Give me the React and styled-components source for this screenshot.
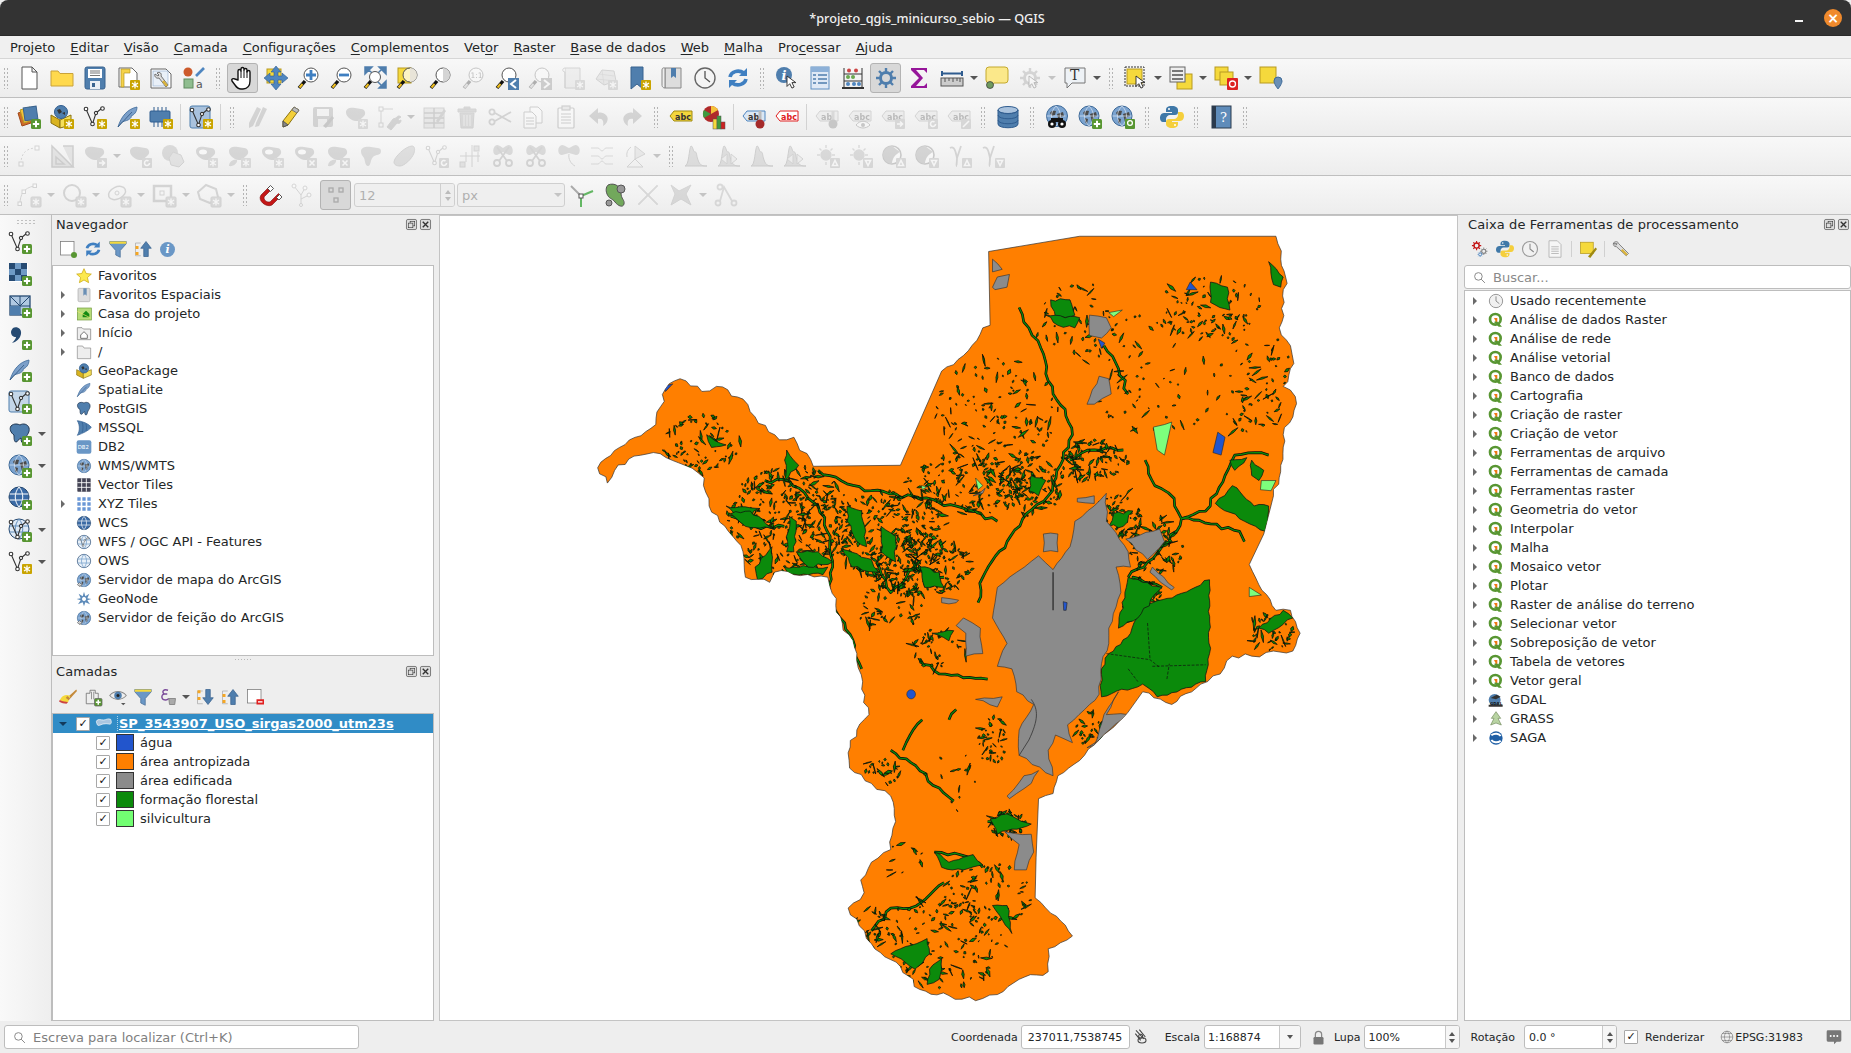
import React from 'react';
import styled, { createGlobalStyle } from 'styled-components';

const GlobalStyle = createGlobalStyle`
  html, body { margin: 0; padding: 0; background: #eeeeee; overflow: hidden; }
  body { font-family: "DejaVu Sans", "Liberation Sans", sans-serif; font-size: 13px; color: #232627; }
`;

/* ---------- icon parts ---------- */
const Star = () => (
  <g>
    <rect x="14" y="14" width="10" height="10" rx="1" fill="#c9a400" />
    <path d="M19 15.5v7M16 17l6 4M22 17l-6 4" stroke="#fff" strokeWidth="1.3" />
  </g>
);
const Plus = () => (
  <g>
    <rect x="14" y="14" width="10" height="10" rx="1.5" fill="#589632" />
    <path d="M19 15.8v6.4M15.8 19h6.4" stroke="#fff" strokeWidth="2" />
  </g>
);
const Badge = ({ fill = '#999', d }) => (
  <g>
    <rect x="14" y="14" width="10" height="10" rx="1" fill={fill} />
    <path d={d} stroke="#fff" strokeWidth="1.6" fill="none" />
  </g>
);
const Mag = ({ fill = '#fff', cx = 14, cy = 9, r = 7 }) => (
  <g>
    <path d="M8 15L2 22" stroke="#111" strokeWidth="3.4" />
    <path d="M5.5 18L2.5 21.5" stroke="#f0c020" strokeWidth="2" />
    <circle cx={cx} cy={cy} r={r} fill={fill} stroke="#555" strokeWidth="1" />
  </g>
);
const V = ({ c = '#333' }) => (
  <g fill="#fff" stroke={c} strokeWidth="1.1">
    <path d="M3 4l6.5 15L13 8l6-5" fill="none" />
    <circle cx="3" cy="4" r="1.8" />
    <circle cx="9.5" cy="19" r="1.8" />
    <circle cx="13" cy="8" r="1.6" />
    <circle cx="19.5" cy="3.5" r="1.8" />
  </g>
);
const Feather = () => (
  <g>
    <path d="M2 22C5 12 11 4 21 2c0 5-3 8-6 9 1 1-1 3-3 4s-5 1-7 3z" fill="#7b9fc9" stroke="#3e6a99" strokeWidth=".8" />
    <path d="M2 22L16 7" stroke="#2f5580" strokeWidth=".8" />
  </g>
);
const Globe = ({ r = 10, cx = 11, cy = 11 }) => (
  <g>
    <circle cx={cx} cy={cy} r={r} fill="#7ba3cf" stroke="#3e6a99" />
    <path d="M5 8c2-3 4-2 6-2l-1 4-3 1zM12 9l6-2 1 4-3 1v4l-2 1zM7 13l3 1-1 5-2-2z" fill="#4a4a4a" />
    <path d="M1.5 11h19M11 1c-6 6-6 14 0 20M11 1c6 6 6 14 0 20" stroke="#dde7f3" strokeWidth=".7" fill="none" />
  </g>
);
const GridGlobe = ({ fill = '#3a6aa5', line = '#fff' }) => (
  <g>
    <circle cx="11" cy="11" r="10" fill={fill} stroke="#24476f" />
    <path d="M1.5 8h19M1.5 14h19M11 1c-5 6-5 14 0 20M11 1c5 6 5 14 0 20" stroke={line} strokeWidth="1" fill="none" />
  </g>
);
const blobD = 'M2 7c0-4 5-5 9-4s9 0 10 4-3 5-4 7-6 3-9 1-6-4-6-8z';
const Blob = ({ fill = '#909090' }) => <path d={blobD} fill={fill} />;
const Pg = () => (
  <path d="M3 4c3-3 7-2 9-1 3-2 8-1 9 3 1 4-2 7-3 9-1 2-1 6-3 6s-2-4-2-5c-3 1-3 4-5 4S6 16 6 13C3 11 1 7 3 4z" fill="#4f7ead" stroke="#1f3550" strokeWidth="1" />
);
const Gear = ({ c = '#4f7ead' }) => (
  <g stroke={c} fill="none">
    <circle cx="12" cy="12" r="5.5" strokeWidth="3" />
    <path d="M12 2v5M12 17v5M2 12h5M17 12h5M5 5l3.5 3.5M15.5 15.5L19 19M19 5l-3.5 3.5M8.500 15.500L5 19" strokeWidth="2.4" />
  </g>
);
const Cursor = ({ x = 10, y = 10 }) => (
  <path transform={`translate(${x} ${y}) scale(.55)`} d="M0 0v19l5-5 4 8 4-2-4-8h7z" fill="#fff" stroke="#222" strokeWidth="1.6" />
);
const Abc = ({ fill = '#f4d63c', stroke = '#a08a10', color = '#333', label = 'abc' }) => (
  <g>
    <path d="M1 11l4-5h18v10H5z" fill={fill} stroke={stroke} />
    <text x="6" y="14.500" fontSize="8" fontWeight="700" fontFamily="DejaVu Sans" fill={color}>{label}</text>
  </g>
);
const Refresh = () => (
  <g fill="none" stroke="#3f7fc1" strokeWidth="3.6">
    <path d="M4 11c1-5 8-8 14-4" />
    <path d="M20 13c-1 5-8 8-14 4" />
    <path d="M21 2v8h-8z" fill="#3f7fc1" stroke="none" />
    <path d="M3 22v-8h8z" fill="#3f7fc1" stroke="none" />
  </g>
);
const Folder = ({ fill = '#ffd94d', stroke = '#c9a23a' }) => (
  <path d="M1 20V5h7l2 2.500h13V20z" fill={fill} stroke={stroke} />
);
const Hist = ({ up, down }) => (
  <g>
    <path d="M1 22c4 0 4-18 6-20 2 0 2 6 4 6s1 2 3 8 5 6 9 6z" fill="#aaa" stroke="#777" />
    {(up || down) && <path d="M10 10l-6 5 6 5zM14 10l6 5-6 5z" fill="#ddd" stroke="#888" />}
  </g>
);
const UpBadge = () => <Badge d="M16.500 21.500l2.500-5 2.500 5z" />;
const DownBadge = () => <Badge d="M16.500 16.500l2.500 5 2.500-5z" />;
const Sun = () => (
  <g stroke="#999" strokeWidth="1.4">
    <circle cx="10" cy="11" r="5" fill="#999" />
    <path d="M10 1v3M10 18v3M1 11h3M16 11h3M3.500 4.500l2 2M14.500 6.500l2-2" />
  </g>
);
const Contrast = () => (
  <g>
    <circle cx="10" cy="11" r="9" fill="#fff" stroke="#666" strokeWidth="1.6" />
    <path d="M10 2a9 9 0 0 0 0 18c0-6 4-10 8-12z" fill="#888" />
  </g>
);
const Gamma = () => <path d="M2 4c5-3 6 6 7 10l4-12M9 14c0 4-1 8 0 8" stroke="#888" strokeWidth="1.800" fill="none" />;
const Scissors = () => (
  <g fill="none" stroke="#888" strokeWidth="1.800">
    <circle cx="6" cy="19" r="3" />
    <circle cx="18" cy="19" r="3" />
    <path d="M8 17L18 3M16 17L6 3" />
  </g>
);

const icons = {
  new: <path d="M5 1h10l5 5v17H5z M15 1v5h5" fill="#fff" stroke="#555" strokeWidth="1" />,
  open: <Folder />,
  save: (
    <g>
      <rect x="2" y="1" width="20" height="22" rx="2" fill="#4f7ead" stroke="#39638f" />
      <rect x="5" y="3" width="14" height="9" fill="#fff" />
      <path d="M7 5h10M7 7h10M7 9.500h10" stroke="#777" />
      <rect x="7" y="15" width="10" height="8" fill="#e9eef4" />
      <rect x="9" y="17" width="3" height="4" fill="#39638f" />
    </g>
  ),
  layout: (
    <g>
      <path d="M3 2h13l5 5v14H3z" fill="#fff" stroke="#666" />
      <path d="M5 3h9v4H8v14H5z" fill="#f5d24a" stroke="#b79a20" strokeWidth=".7" />
      <Star />
    </g>
  ),
  layoutMgr: (
    <g>
      <path d="M2 3h15l5 5v14H2z" fill="#fff" stroke="#666" />
      <rect x="4" y="5" width="15" height="15" fill="#e9f0f8" stroke="#9db6d4" strokeWidth=".7" />
      <path d="M8 7c3-2 5 1 4 3l7 9-2 2-7-9c-3 1-5-2-4-4l3 2 1-1z" fill="#ddd" stroke="#555" strokeWidth=".8" />
      <path d="M14 15l4 5" stroke="#d9b33a" strokeWidth="2.400" />
    </g>
  ),
  style: (
    <g>
      <circle cx="6" cy="6" r="4.500" fill="#cc5a2b" />
      <path d="M14 10l8-8" stroke="#4f86c0" strokeWidth="2.600" />
      <rect x="2" y="13" width="9" height="9" fill="#8fbd8f" stroke="#5f8a5f" />
      <text x="14" y="22" fontSize="11" fontFamily="DejaVu Sans" fill="#555">a</text>
    </g>
  ),
  hand: (
    <g fill="#fff" stroke="#111" strokeWidth="1.400" strokeLinejoin="round">
      <path d="M7 14V5c0-2 3-2 3 0V3c0-2 3-2 3 0v1c0-2 3-2 3 0v2c0-2 3-2 3 0v9c0 5-3 8-7 8h-2c-3 0-4-1-6-4l-3-4c-1-2 1-3 3-2z" />
      <path d="M10 5v7M13 4v8M16 5v7" fill="none" strokeWidth="1" />
    </g>
  ),
  pan: (
    <g>
      <rect x="3" y="3" width="14" height="14" fill="#f5d93c" stroke="#b79a20" />
      <path d="M12 0l5 6h-3v4h4V7l6 5-6 5v-3h-4v4h3l-5 6-5-6h3v-4H6v3l-6-5 6-5v3h4V6H7z" fill="#4f86c0" stroke="#2f5c8f" strokeWidth=".6" />
    </g>
  ),
  zoomIn: (
    <g>
      <Mag />
      <path d="M14 4v10M9 9h10" stroke="#3f7fc1" strokeWidth="2.800" />
    </g>
  ),
  zoomOut: (
    <g>
      <Mag />
      <path d="M9 9h10" stroke="#3f7fc1" strokeWidth="2.800" />
    </g>
  ),
  zoomFull: (
    <g>
      <path d="M2 1h7L2 8zM23 1h-7l7 7zM23 22h-7l7-7zM6 4l4 4M18 4l-4 4M18 19l-4-4" fill="#4f7ead" stroke="#4f7ead" strokeWidth="1.500" />
      <Mag cx="12" cy="11" r="5.500" />
    </g>
  ),
  zoomLayer: (
    <g>
      <rect x="2" y="2" width="13" height="15" fill="#f5d93c" stroke="#b79a20" />
      <Mag fill="rgba(255,255,255,.7)" />
      <path d="M14 2a7 7 0 0 1 0 14z" fill="#e8e4d8" />
    </g>
  ),
  zoomSel: (
    <g>
      <Mag />
      <path d="M14 2a7 7 0 0 1 0 14z" fill="#d5d5d5" />
    </g>
  ),
  zoom11: (
    <g>
      <Mag />
      <text x="8.500" y="12" fontSize="7.500" fontFamily="DejaVu Sans" fill="#333">1:1</text>
    </g>
  ),
  zoomLast: (
    <g>
      <Mag />
      <rect x="13" y="12" width="11" height="12" fill="#4f7ead" />
      <path d="M21 14l-5 4 5 4" stroke="#fff" strokeWidth="2" fill="none" />
    </g>
  ),
  zoomNext: (
    <g>
      <Mag />
      <rect x="13" y="12" width="11" height="12" fill="#777" />
      <path d="M16 14l5 4-5 4" stroke="#fff" strokeWidth="2" fill="none" />
    </g>
  ),
  mapView: (
    <g>
      <path d="M4 2h15v20H4z" fill="#ddd" stroke="#888" />
      <path d="M4 2c-3 0-3 4 0 4M4 6v16" stroke="#888" fill="#eee" />
      <Star />
    </g>
  ),
  view3d: (
    <g>
      <path d="M2 13l6-9 12 1 2 10-12 4z" fill="#ccc" stroke="#888" />
      <path d="M8 4l2 15M2 13l20 2M5 8l15 2" stroke="#999" strokeWidth=".7" />
      <Star />
    </g>
  ),
  bookmark: (
    <g>
      <path d="M4 1h12v22l-6-5-6 5z" fill="#4f7ead" stroke="#39638f" />
      <Star />
    </g>
  ),
  bookmarks: (
    <g>
      <path d="M5 2h16v20H5z" fill="#ddd" stroke="#888" />
      <path d="M2 4c0-3 3-2 3-2v20c-3 0-3-3-3-3z" fill="#eee" stroke="#888" />
      <path d="M11 2h5v10l-2.500-2-2.500 2z" fill="#4f7ead" />
    </g>
  ),
  temporal: (
    <g>
      <circle cx="12" cy="12" r="10" fill="#f4f4f4" stroke="#666" strokeWidth="1.400" />
      <path d="M12 5v7l5 4" stroke="#555" strokeWidth="1.300" fill="none" />
    </g>
  ),
  refresh: <Refresh />,
  identify: (
    <g>
      <circle cx="9" cy="9" r="8" fill="#4f7ead" />
      <text x="6.500" y="14" fontSize="13" fontWeight="700" fontStyle="italic" fontFamily="DejaVu Serif" fill="#fff">i</text>
      <Cursor x="12" y="10" />
    </g>
  ),
  table: (
    <g>
      <rect x="3" y="1" width="18" height="22" fill="#dfe9f5" stroke="#5f8fc2" />
      <rect x="3" y="1" width="18" height="5" fill="#8db1d8" />
      <path d="M5 9h3M10 9h9M5 13h3M10 13h9M5 17h3M10 17h9" stroke="#4f7ead" strokeWidth="1.500" />
    </g>
  ),
  stats: (
    <g>
      <path d="M3 2v19M21 2v19M3 8h18M3 15h18" stroke="#333" fill="none" />
      <circle cx="8" cy="4.500" r="2" fill="#cc4444" />
      <circle cx="15" cy="4.500" r="2" fill="#cc4444" />
      <circle cx="7" cy="11" r="2" fill="#6aa84f" />
      <circle cx="12" cy="11" r="2" fill="#6aa84f" />
      <circle cx="7" cy="18" r="2" fill="#4f86c0" />
      <circle cx="13" cy="18" r="2" fill="#4f86c0" />
      <circle cx="18" cy="18" r="2" fill="#4f86c0" />
      <path d="M1 22h22" stroke="#333" strokeWidth="2" />
    </g>
  ),
  gear: <Gear />,
  sigma: <path d="M4 2h16v5l-3-3H9l7 8-7 8h8l3-3v5H4v-2l8-8-8-8z" fill="#96169a" />,
  ruler: (
    <g>
      <path d="M2 5v5M22 5v5M2 7.500h20" stroke="#2f5c8f" strokeWidth="2" />
      <rect x="1" y="12" width="22" height="8" fill="#ccc" stroke="#555" />
      <path d="M5 12v4M9 12v3M13 12v4M17 12v3M20 12v4" stroke="#555" />
    </g>
  ),
  balloon: (
    <g>
      <path d="M4 1h16a3 3 0 0 1 3 3v10a3 3 0 0 1-3 3H9l-4 5v-5H4a3 3 0 0 1-3-3V4a3 3 0 0 1 3-3z" fill="#fbe88a" stroke="#c4a92d" />
      <circle cx="5" cy="19" r="3.500" fill="#6f9a5f" stroke="#333" strokeWidth=".7" />
    </g>
  ),
  run: (
    <g>
      <Gear c="#888" />
      <Cursor x="11" y="10" />
    </g>
  ),
  textAnn: (
    <g>
      <path d="M2 2h20v15H9l-5 5v-5H2z" fill="#eef2f6" stroke="#777" />
      <text x="7" y="14" fontSize="14" fontFamily="DejaVu Serif" fill="#333">T</text>
    </g>
  ),
  select: (
    <g>
      <rect x="1" y="1" width="19" height="19" fill="none" stroke="#333" strokeDasharray="2 1" />
      <rect x="3" y="3" width="15" height="15" fill="#f5d93c" stroke="#b79a20" />
      <Cursor x="12" y="10" />
    </g>
  ),
  form: (
    <g>
      <rect x="8" y="8" width="15" height="15" fill="#f5d93c" stroke="#b79a20" />
      <rect x="1" y="1" width="15" height="15" fill="#eee" stroke="#666" />
      <path d="M3 5h11M3 9h11M3 13h11" stroke="#777" strokeWidth="2" />
    </g>
  ),
  deselect: (
    <g>
      <rect x="1" y="1" width="13" height="13" fill="#f5d93c" stroke="#b79a20" />
      <rect x="6" y="6" width="13" height="13" fill="#f5d93c" stroke="#b79a20" />
      <rect x="13" y="12" width="11" height="12" rx="1" fill="#d22" />
      <circle cx="18.500" cy="18" r="3" fill="none" stroke="#fff" strokeWidth="1.300" />
    </g>
  ),
  selLoc: (
    <g>
      <rect x="1" y="1" width="16" height="16" fill="#f5d93c" stroke="#b79a20" />
      <path d="M19 11a4 4 0 0 1 4 4c0 3-4 8-4 8s-4-5-4-8a4 4 0 0 1 4-4z" fill="#6a8fb5" stroke="#3e6a99" />
    </g>
  ),
  dsm: (
    <g>
      <path d="M1 8l10-3 3 13-9 3z" fill="#d06a2a" stroke="#a04a1a" />
      <path d="M3 5l10-3 3 13-9 3z" fill="#f5c23a" stroke="#b79a20" />
      <rect x="7" y="2" width="13" height="13" transform="rotate(-8 13 8)" fill="#4f7ead" stroke="#39638f" />
      <Plus />
    </g>
  ),
  gpkgNew: (
    <g>
      <path d="M1 10l9 5v8l-9-5z" fill="#d9b320" stroke="#8a7210" />
      <path d="M10 15l11-5v10l-11 3z" fill="#f5df5a" stroke="#8a7210" />
      <circle cx="11" cy="7" r="6.500" fill="#4f7ead" stroke="#2f5c8f" />
      <path d="M7 5l3-1 2 3-3 2zM12 8l3-1v3z" fill="#333" />
      <Star />
    </g>
  ),
  vNew: (
    <g>
      <V />
      <Star />
    </g>
  ),
  featherNew: (
    <g>
      <Feather />
      <Star />
    </g>
  ),
  chipNew: (
    <g>
      <path d="M5 2v5M9 2v5M13 2v5M17 2v5M5 17v5M9 17v5M13 17v5" stroke="#2f5c8f" />
      <rect x="1" y="6" width="20" height="11" rx="1" fill="#4f7ead" stroke="#2f5c8f" />
      <Star />
    </g>
  ),
  virtualNew: (
    <g>
      <rect x="1" y="1" width="20" height="22" rx="2" fill="#a9c2dd" stroke="#4f7ead" />
      <g transform="translate(0 1)"><V /></g>
      <Star />
    </g>
  ),
  pens: (
    <g fill="#888">
      <path d="M12 2l4 2-8 17-4 2 0-5z" />
      <path d="M18 2l4 2-8 17-4 1 1-4z" />
    </g>
  ),
  pencil: (
    <g>
      <path d="M16 2l5 3-11 15-5 2 0-6z" fill="#f3cf3a" stroke="#8a7210" />
      <path d="M16 2l5 3-2 3-5-3z" fill="#bbb" stroke="#777" />
      <path d="M5 16l0 6 5-2z" fill="#888" stroke="#555" />
    </g>
  ),
  saveEdit: (
    <g>
      <rect x="2" y="2" width="20" height="20" rx="2" fill="#888" />
      <rect x="6" y="4" width="12" height="7" fill="#eee" />
      <rect x="7" y="14" width="9" height="8" fill="#ddd" />
      <path d="M12 21l9-10 2 2-8 10z" fill="#666" />
    </g>
  ),
  blobStar: (
    <g>
      <Blob />
      <Star />
    </g>
  ),
  vertex: (
    <g stroke="#888" fill="none">
      <rect x="2" y="2" width="4" height="4" />
      <rect x="2" y="18" width="4" height="4" />
      <path d="M4 6v12M6 4h10" />
      <path d="M10 22l6-8 3-1c2-3 4-2 5-1l-3 2 1 2 2-1c0 3-2 4-4 3l-6 7z" fill="#888" />
    </g>
  ),
  tableEdit: (
    <g>
      <rect x="2" y="3" width="20" height="20" fill="#ccc" stroke="#888" />
      <path d="M2 8h20M2 13h20M2 18h20M12 3v20" stroke="#777" strokeWidth="1.500" />
      <path d="M14 16l8-12 2 2-8 12z" fill="#888" />
    </g>
  ),
  trash: (
    <g fill="#a59a96" stroke="#888">
      <path d="M3 4h18v3H3zM9 2h6v2H9z" />
      <path d="M5 8h14l-1 15H6z" />
      <path d="M9 10v11M12 10v11M15 10v11" stroke="#ddd" />
    </g>
  ),
  cut: (
    <g fill="none" stroke="#888" strokeWidth="1.800">
      <circle cx="4" cy="7" r="2.600" />
      <circle cx="4" cy="17" r="2.600" />
      <path d="M7 8l16 9M7 16L23 7" />
    </g>
  ),
  copy: (
    <g fill="#fff" stroke="#777">
      <path d="M9 2h8l4 4v12H9z" />
      <path d="M3 7h8l4 4v12H3z" />
      <path d="M5 13h8M5 16h8M5 19h8" />
    </g>
  ),
  paste: (
    <g fill="#fff" stroke="#777" strokeWidth="1.200">
      <rect x="4" y="3" width="16" height="20" rx="1" />
      <rect x="8" y="1" width="8" height="4" fill="#ccc" />
      <path d="M7 9h10M7 12h10M7 15h10M7 18h10" />
    </g>
  ),
  undo: <path d="M11 3L2 11l9 8v-5c5-1 6 3 5 7 5-3 6-8 3-11-2-2-5-3-8-2z" fill="#888" />,
  redo: <path d="M13 3l9 8-9 8v-5c-5-1-6 3-5 7-5-3-6-8-3-11 2-2 5-3 8-2z" fill="#888" />,
  lblYellow: <Abc />,
  diagram: (
    <g>
      <circle cx="9" cy="9" r="8" fill="#b02a2a" />
      <path d="M9 9V1a8 8 0 0 1 7 4z" fill="#f5c23a" />
      <path d="M9 9L2 13a8 8 0 0 1 0-8z" fill="#3f9a3f" />
      <rect x="11" y="14" width="4" height="10" fill="#f5d93c" stroke="#555" strokeWidth=".5" />
      <rect x="15" y="11" width="4" height="13" fill="#3f9a3f" stroke="#555" strokeWidth=".5" />
      <rect x="19" y="17" width="4" height="7" fill="#c22" stroke="#555" strokeWidth=".5" />
    </g>
  ),
  lblPin: (
    <g>
      <Abc fill="#dbe7f4" stroke="#4f86c0" label="ab" />
      <path d="M18 6v10" stroke="#bbb" strokeWidth="3" />
      <circle cx="18" cy="19" r="4.500" fill="#a52a2a" />
    </g>
  ),
  lblRed: <Abc fill="#fff" stroke="#e02020" color="#e02020" />,
  lblTemp: (
    <g>
      <Abc fill="#ddd" stroke="#888" label="ab" />
      <path d="M18 6v10" stroke="#999" strokeWidth="3" />
      <circle cx="18" cy="19" r="4.500" fill="#666" />
    </g>
  ),
  lblEye: (
    <g>
      <Abc fill="#ddd" stroke="#888" />
      <path d="M8 20c4-5 10-5 14 0-4 4-10 4-14 0z" fill="#fff" stroke="#666" />
      <circle cx="15" cy="20" r="2" fill="#666" />
    </g>
  ),
  lblMove: (
    <g>
      <Abc fill="#ddd" stroke="#888" />
      <Badge d="M16 19h5M19 16.500l2.500 2.500-2.500 2.500" />
    </g>
  ),
  lblRot: (
    <g>
      <Abc fill="#ddd" stroke="#888" />
      <Badge d="M21.500 19a2.500 2.500 0 1 1-1-2" />
    </g>
  ),
  lblEdit: (
    <g>
      <Abc fill="#ddd" stroke="#888" />
      <Badge d="M16 22l6-6" />
    </g>
  ),
  db: (
    <g>
      <ellipse cx="12" cy="5" rx="10" ry="3.500" fill="#a9c2dd" stroke="#2f5c8f" />
      <path d="M2 5v14c0 5 20 5 20 0V5c0 5-20 5-20 0z" fill="#4f7ead" stroke="#2f5c8f" />
      <path d="M2 10c0 5 20 5 20 0M2 15c0 5 20 5 20 0" stroke="#2f5c8f" fill="none" />
    </g>
  ),
  globeBin: (
    <g>
      <Globe r="10.500" cx="12" cy="11" />
      <circle cx="7" cy="19" r="4" fill="#111" />
      <circle cx="17" cy="19" r="4" fill="#111" />
      <rect x="6" y="13" width="12" height="4" fill="#111" />
      <circle cx="7" cy="19" r="1.600" fill="#fff" />
      <circle cx="17" cy="19" r="1.600" fill="#fff" />
    </g>
  ),
  globePlus: (
    <g>
      <Globe />
      <Plus />
    </g>
  ),
  globeSearch: (
    <g>
      <Globe />
      <rect x="14" y="14" width="10" height="10" rx="1" fill="#589632" />
      <circle cx="19" cy="18" r="2.400" fill="none" stroke="#fff" strokeWidth="1.300" />
    </g>
  ),
  python: (
    <g>
      <path d="M12 1c-5 0-6 2-6 4v2h6v1H4c-3 0-4 3-4 5s1 4 3 4h3v-3c0-2 2-4 4-4h5c2 0 3-1 3-3V5c0-2-2-4-6-4z" fill="#3f78a8" />
      <circle cx="9" cy="4" r="1" fill="#fff" />
      <path d="M12 23c5 0 6-2 6-4v-2h-6v-1h8c3 0 4-3 4-5s-1-4-3-4h-3v3c0 2-2 4-4 4h-5c-2 0-3 1-3 3v2c0 2 2 4 6 4z" fill="#f5cf3c" />
      <circle cx="15" cy="20" r="1" fill="#fff" />
    </g>
  ),
  help: (
    <g>
      <rect x="3" y="1" width="19" height="22" fill="#5f8cba" stroke="#2b3a4c" />
      <rect x="3" y="1" width="4" height="22" fill="#2b3a4c" />
      <text x="11" y="17" fontSize="13" fontFamily="DejaVu Serif" fill="#fff">?</text>
    </g>
  ),
  curve: (
    <g fill="#fff" stroke="#888">
      <path d="M4 20C4 10 8 5 18 4" strokeDasharray="2 2" fill="none" />
      <rect x="2" y="18" width="4" height="4" />
      <rect x="18" y="2" width="4" height="4" />
    </g>
  ),
  triangle: (
    <g fill="none" stroke="#777" strokeWidth="1.500">
      <path d="M2 2l21 21H2z" fill="#bbb" />
      <path d="M6 13l8 7H6zM13 2l10 0v21" fill="#bbb" />
    </g>
  ),
  blobArrow: (
    <g>
      <Blob />
      <Badge d="M16 19h5M19 16.500l2.500 2.500-2.500 2.500" />
    </g>
  ),
  blobRot: (
    <g>
      <Blob />
      <Badge d="M21.500 19a2.500 2.500 0 1 1-1-2" />
    </g>
  ),
  offsetHex: (
    <g>
      <circle cx="9" cy="9" r="8" fill="#999" />
      <path d="M12 8l8 3 3 7-5 5-8-2-2-7z" fill="#bbb" stroke="#888" />
    </g>
  ),
  ringStar: (
    <g>
      <Blob />
      <ellipse cx="9" cy="8" rx="4" ry="2.500" fill="#fff" />
      <Star />
    </g>
  ),
  partStar: (
    <g>
      <Blob />
      <path d="M2 22c0-4 4-7 8-6 1 3-4 7-8 6z" fill="#999" />
      <Star />
    </g>
  ),
  ringX: (
    <g>
      <Blob />
      <ellipse cx="9" cy="8" rx="4" ry="2.500" fill="#fff" />
      <Badge d="M16.500 16.500l5 5M21.500 16.500l-5 5" />
    </g>
  ),
  partX: (
    <g>
      <Blob />
      <path d="M2 22c0-4 4-7 8-6 1 3-4 7-8 6z" fill="#999" />
      <Badge d="M16.500 16.500l5 5M21.500 16.500l-5 5" />
    </g>
  ),
  blobFill: <path d="M2 7c0-4 6-5 10-4s10 0 10 4c0 5-5 3-8 6s-2 9-5 9-3-6-4-8-3-3-3-7z" fill="#999" />,
  reshape: <path d="M2 18c0-5 12-16 18-16 3 0 3 4 2 7-2 6-10 13-14 13-3 0-6-1-6-4z" fill="#aaa" stroke="#888" />,
  vRot: (
    <g>
      <V c="#888" />
      <Badge d="M21.500 19a2.500 2.500 0 1 1-1-2" />
    </g>
  ),
  splitSnap: (
    <g stroke="#888" fill="none">
      <path d="M14 1v22M2 12h20M8 8v10M20 8v10" />
      <rect x="16" y="2" width="5" height="5" fill="#bbb" />
      <rect x="2" y="18" width="5" height="5" fill="#bbb" />
    </g>
  ),
  scissor: (
    <g>
      <path d="M4 2c-3 3-2 10 2 9l6-3 6 3c4 1 5-6 2-9s-6 1-8 2c-2-1-5-5-8-2z" fill="#999" />
      <Scissors />
    </g>
  ),
  merge: (
    <g>
      <path d="M3 2c-3 3-2 9 2 9l7-2 7 2c4 0 5-6 2-9s-6 1-9 2C9 3 6-1 3 2z" fill="#999" />
      <path d="M12 10c-1 5 2 10 6 12" stroke="#888" fill="none" />
    </g>
  ),
  align: (
    <g stroke="#999" fill="none">
      <path d="M1 4h7c2 0 2 3 4 3s2-3 4-3h7M1 12h7c2 0 2 3 4 3s2-3 4-3h7M1 20h7c2 0 2-3 4-3s2 3 4 3h7" />
    </g>
  ),
  rotate: (
    <g fill="#ccc" stroke="#888">
      <path d="M12 2l10 8-10 5z" />
      <path d="M12 15l-8 8h16z" fill="none" />
      <path d="M8 3a10 10 0 0 0-4 10" fill="none" />
    </g>
  ),
  hist: <Hist />,
  histUp: <Hist up />,
  sunUp: (
    <g>
      <Sun />
      <UpBadge />
    </g>
  ),
  sunDown: (
    <g>
      <Sun />
      <DownBadge />
    </g>
  ),
  conUp: (
    <g>
      <Contrast />
      <UpBadge />
    </g>
  ),
  conDown: (
    <g>
      <Contrast />
      <DownBadge />
    </g>
  ),
  gamUp: (
    <g>
      <Gamma />
      <UpBadge />
    </g>
  ),
  gamDown: (
    <g>
      <Gamma />
      <DownBadge />
    </g>
  ),
  cCurve: (
    <g fill="#fff" stroke="#888">
      <path d="M3 21C3 11 7 5 17 3" fill="none" />
      <rect x="1" y="19" width="3.500" height="3.500" />
      <rect x="16" y="1" width="3.500" height="3.500" />
      <rect x="5" y="7" width="3.500" height="3.500" />
      <Star />
    </g>
  ),
  cCircle: (
    <g fill="none" stroke="#888">
      <circle cx="10" cy="10" r="8" strokeWidth="2" />
      <Star />
    </g>
  ),
  cEllipse: (
    <g fill="none" stroke="#888">
      <ellipse cx="10" cy="10" rx="9" ry="6" transform="rotate(-25 10 10)" strokeWidth="1.500" />
      <circle cx="10" cy="10" r="2" />
      <Star />
    </g>
  ),
  cRect: (
    <g fill="none" stroke="#888">
      <rect x="2" y="3" width="17" height="15" strokeWidth="2.500" />
      <rect x="8" y="8" width="4" height="4" />
      <Star />
    </g>
  ),
  cPoly: (
    <g fill="none" stroke="#888">
      <path d="M9 2l10 4 2 8-8 6-10-4-2-7z" strokeWidth="2" />
      <Star />
    </g>
  ),
  magnet: (
    <g>
      <path d="M3 12L12 3l2.500 2.500-8 8c-2 3 3 7 6 5l8-8L23 13 14 22c-5 3-15-4-11-10z" transform="rotate(0)" fill="#c41616" stroke="#7a0c0c" strokeWidth=".6" />
      <path d="M9.500 5.500l3-3 3 3-3 3zM18.500 14.500l3-3 2.500 2.500-3 3z" fill="#fff" stroke="#333" strokeWidth=".8" />
    </g>
  ),
  vSnap: (
    <g fill="#fff" stroke="#888">
      <path d="M10 22V12L3 3M10 12l4-7M10 16l8-4" fill="none" />
      <circle cx="3" cy="3" r="2" />
      <circle cx="14" cy="5" r="2" />
      <circle cx="18" cy="12" r="2" />
      <circle cx="10" cy="22" r="1.500" />
    </g>
  ),
  dots: (
    <g fill="none" stroke="#aaa" strokeWidth="1.300">
      <rect x="5" y="5" width="4" height="4" />
      <rect x="15" y="5" width="4" height="4" />
      <rect x="10" y="15" width="4" height="4" />
    </g>
  ),
  axes: (
    <g fill="none">
      <path d="M11 13V24" stroke="#64b764" strokeWidth="2" />
      <path d="M11 13L1 3" stroke="#aaa" strokeWidth="2" />
      <path d="M11 13L23 8" stroke="#64b764" strokeWidth="2" />
      <rect x="9" y="11" width="4" height="4" fill="#fff" stroke="#555" />
    </g>
  ),
  blobDots: (
    <g>
      <path d="M5 2c7-3 13 2 13 8s4 7 3 11-6 2-9-2-6-3-8-8 0-8 1-9z" fill="#72a85c" stroke="#555" />
      <circle cx="18" cy="6" r="4" fill="#999" stroke="#555" />
      <circle cx="6" cy="20" r="3" fill="#999" stroke="#555" />
    </g>
  ),
  cross: <path d="M3 2l9 9 9-9 1 1-9 9 9 9-1 1-9-9-9 9-1-1 9-9-9-9z" fill="#999" stroke="#aaa" />,
  crossMerge: <path d="M2 2l8 6 12-6-5 9 5 11-10-6-10 6 4-11z" fill="#999" stroke="#888" />,
  nodes: (
    <g fill="none" stroke="#999" strokeWidth="1.800">
      <circle cx="4" cy="20" r="2.500" />
      <circle cx="6" cy="4" r="2.500" />
      <circle cx="20" cy="20" r="2.500" />
      <path d="M6 18L10 4 18 18" />
    </g>
  ),
  /* left bar */
  vAdd: (
    <g>
      <V />
      <Plus />
    </g>
  ),
  rasterAdd: (
    <g>
      <rect x="1" y="1" width="19" height="19" fill="#fff" />
      <path d="M1 1h6v6H1zM13 1h6v6h-6zM7 7h6v6H7zM1 13h6v6H1zM13 13h6v6h-6z" fill="#264a72" />
      <path d="M7 1h6v6H7zM1 7h6v6H1zM13 7h6v6h-6zM7 13h6v6H7z" fill="#6f9ac5" />
      <Plus />
    </g>
  ),
  meshAdd: (
    <g>
      <rect x="2" y="2" width="20" height="19" fill="#b0c9e2" stroke="#264a72" strokeWidth="1.300" />
      <path d="M2 12h20M12 2v19M2 2l10 10M22 2L12 12" stroke="#264a72" />
      <path d="M2 12h10v9H2z" fill="#4f7ead" />
      <Plus />
    </g>
  ),
  textAdd: (
    <g>
      <path d="M5 2c4-2 9 1 8 6s-5 8-9 9c3-3 4-5 4-6-3 0-5-2-5-5 0-1 1-3 2-4z" fill="#264a72" />
      <Plus />
    </g>
  ),
  featherAdd: (
    <g>
      <Feather />
      <Plus />
    </g>
  ),
  virtualAdd: (
    <g>
      <rect x="1" y="1" width="20" height="21" rx="2" fill="#c4d6e8" stroke="#4f7ead" />
      <V />
      <Plus />
    </g>
  ),
  pgAdd: (
    <g>
      <Pg />
      <Plus />
    </g>
  ),
  globeAdd: (
    <g>
      <Globe />
      <Plus />
    </g>
  ),
  wcsAdd: (
    <g>
      <GridGlobe />
      <Plus />
    </g>
  ),
  wfsAdd: (
    <g>
      <GridGlobe fill="#dfeaf6" line="#5f8cba" />
      <V />
      <Plus />
    </g>
  ),
  vStar: (
    <g>
      <V />
      <Star />
    </g>
  ),
  /* browser and other docks */
  fav: <path d="M12 1l3.300 7.300 7.700.8-5.800 5.200 1.700 7.700L12 18l-6.900 4 1.700-7.700L1 9.100l7.700-.8z" fill="#fce94f" stroke="#c4a000" />,
  favGeo: (
    <g>
      <rect x="3" y="2" width="18" height="20" rx="2" fill="#ddd" stroke="#aaa" />
      <path d="M11 2h5v11l-2.500-2-2.500 2z" fill="#6a8fb5" />
    </g>
  ),
  projHome: (
    <g>
      <rect x="2" y="3" width="21" height="18" fill="#b5db78" stroke="#6f9a3a" />
      <path d="M10 12l5-5 5 5v5h-10z" fill="#138a13" />
      <path d="M2 8l20 10" stroke="#f5e56a" />
    </g>
  ),
  home: (
    <g>
      <path d="M2 4h7l2 2h11v16H2z" fill="#eeeeee" stroke="#777" />
      <path d="M7 15l5-5 5 5v5H7z" fill="#fff" stroke="#333" />
    </g>
  ),
  root: <path d="M2 3h8l2 3h10v16H2z" fill="#eeeeee" stroke="#888" />,
  gpkg: (
    <g>
      <path d="M1 10l10 5v8L1 18z" fill="#d9b320" stroke="#8a7210" />
      <path d="M11 15l12-5v8l-12 5z" fill="#f5df5a" stroke="#8a7210" />
      <circle cx="12" cy="8" r="7" fill="#4f7ead" stroke="#2f5c8f" />
      <path d="M8 6l3-1 2 3-3 2zM13 9l3-1v3z" fill="#333" />
    </g>
  ),
  feather: <Feather />,
  pg: <Pg />,
  mssql: <path d="M2 1c7 1 17 4 21 10-4 5-13 9-21 12 4-7 4-15 0-22z M9 3c2 4 2 12 0 16M15 6c1 3 1 8 0 10" fill="#4f7ead" stroke="#2f5c8f" />,
  db2: (
    <g>
      <rect x="1" y="2" width="22" height="20" rx="3" fill="#6a97c6" />
      <text x="2.500" y="15" fontSize="8" fontFamily="DejaVu Sans" fill="#fff">DB2</text>
    </g>
  ),
  wms: <g transform="translate(1 1)"><Globe /></g>,
  vTiles: (
    <g>
      <rect x="2" y="2" width="20" height="20" rx="1" fill="#445" />
      <path d="M8.500 2v20M15.500 2v20M2 8.500h20M2 15.500h20" stroke="#fff" strokeWidth="1.300" />
    </g>
  ),
  xyz: <path d="M2 2h5v5H2zM9.500 2h5v5h-5zM17 2h5v5h-5zM2 9.500h5v5H2zM9.500 9.500h5v5h-5zM17 9.500h5v5h-5zM2 17h5v5H2zM9.500 17h5v5h-5zM17 17h5v5h-5z" fill="#6a97d6" />,
  wcs: <g transform="translate(1 1)"><GridGlobe /></g>,
  wfs: (
    <g transform="translate(1 1)">
      <GridGlobe fill="#e8f0f8" line="#6a97c6" />
      <g transform="translate(3 3) scale(.7)"><V c="#555" /></g>
    </g>
  ),
  ows: <g transform="translate(1 1)"><GridGlobe fill="#e8f0f8" line="#6a97c6" /></g>,
  arc: (
    <g transform="translate(1 1)">
      <Globe />
      <path d="M1 18l4 3 3-3-4-3zM4 18l3 3" fill="#ddd" stroke="#444" strokeWidth=".8" />
    </g>
  ),
  geonode: <path d="M12 1l2 7 6-4-3 7 6 1-6 2 4 6-7-3-2 6-2-6-7 3 4-6-6-2 6-1-3-7 6 4z M12 9a3 3 0 1 0 .1 0z" fill="#5f8cba" fillRule="evenodd" />,
  clock: (
    <g>
      <circle cx="12" cy="12" r="10" fill="#f1f1f1" stroke="#999" strokeWidth="1.500" />
      <path d="M12 5v7l5 4" stroke="#888" strokeWidth="1.400" fill="none" />
    </g>
  ),
  qgis: (
    <g>
      <circle cx="11" cy="11" r="8" fill="#fff" stroke="#589632" strokeWidth="4" />
      <path d="M13 13l8 9-5 0-7-7z" fill="#589632" />
      <path d="M9 9h5v5l-2 1z" fill="#ee7913" />
    </g>
  ),
  gdal: (
    <g>
      <circle cx="10" cy="12" r="9" fill="#4f7ead" />
      <path d="M4 9l9-5 6 3-7 4zM1 19h21v3H1z" fill="#333" />
      <text x="3" y="20" fontSize="6" fontWeight="700" fontFamily="DejaVu Sans" fill="#111">GDAL</text>
    </g>
  ),
  grass: <path d="M12 1l7 10-4 0 5 10-8-3-8 3 5-10-4 0z" fill="#b8d3a2" stroke="#6f8a5a" />,
  saga: (
    <g>
      <circle cx="12" cy="12" r="10" fill="#1f5fa5" />
      <path d="M5 8c5-4 11-3 14 1M19 16c-5 4-11 3-14-1" stroke="#fff" strokeWidth="3" fill="none" />
    </g>
  ),
  gearsRun: (
    <g>
      <g transform="scale(.62)"><Gear c="#c41616" /></g>
      <g transform="translate(11 9) scale(.5)"><Gear c="#888" /></g>
      <g transform="translate(8 15) scale(.35)"><Gear c="#4f86c0" /></g>
    </g>
  ),
  doc: (
    <g fill="#f6f6f6" stroke="#aaa">
      <path d="M4 1h11l5 5v17H4z" />
      <path d="M7 9h10M7 12h10M7 15h10M7 18h10" />
    </g>
  ),
  editY: (
    <g>
      <rect x="2" y="3" width="17" height="15" fill="#f5d93c" stroke="#b79a20" />
      <path d="M12 22l10-12 2 2-9 12z" fill="#a08a10" />
    </g>
  ),
  wrench: (
    <g>
      <path d="M2 4c3-3 6-2 7 1l13 13-3 3L6 9C3 9 1 7 2 4l3 3 2-2z" fill="#ddd" stroke="#666" />
      <path d="M13 13l7 7" stroke="#d9b33a" strokeWidth="3" />
    </g>
  ),
  brush: (
    <g>
      <path d="M13 11L23 2l1 2-9 10z" fill="#c48a3a" />
      <path d="M3 13c3-4 8-5 12-2l-3 8c-4 1-8 0-11-3z" fill="#f5d93c" />
      <path d="M1 16c4 2 8 2 11 3l-2 2c-3 0-7-1-10-3z" fill="#cc4444" />
      <path d="M10 12l4 3" stroke="#c48a3a" strokeWidth="3" />
    </g>
  ),
  addGroup: (
    <g fill="none" stroke="#666">
      <path d="M3 7h5V3h7v4h4v14H3z" fill="#eee" />
      <path d="M10 5v10M13 5v10" stroke="#777" />
      <Plus />
    </g>
  ),
  eye: (
    <g>
      <path d="M1 10c6-7 16-7 22 0-6 7-16 7-22 0z" fill="#eee" stroke="#888" strokeWidth="1.400" />
      <circle cx="12" cy="10" r="5" fill="#4f7ead" />
      <circle cx="12" cy="10" r="2" fill="#222" />
      <path d="M16 20l3 3 3-3z" fill="#555" />
    </g>
  ),
  filter: (
    <g>
      <path d="M1 2h22v3l-8 9v9l-6-3v-6L1 5z" fill="#6a97c6" stroke="#4a6f98" />
      <path d="M1 2h22v3H1z" fill="#f5d93c" />
    </g>
  ),
  epsilon: (
    <g>
      <path d="M12 3C6 1 3 5 7 8c-5 1-4 8 2 8 2 0 3-1 4-2M7 8h4" fill="none" stroke="#7a4a9a" strokeWidth="1.800" />
      <path d="M13 14h9l-1 8h-7z" fill="#aaa" stroke="#777" />
    </g>
  ),
  expand: (
    <g>
      <path d="M2 4h7M2 4v17h7M9 4" stroke="#aaa" fill="none" />
      <rect x="2" y="3" width="4" height="4" fill="#f5a623" />
      <rect x="2" y="12" width="4" height="4" fill="#f5a623" />
      <path d="M13 2h6v11h4l-7 9-7-9h4z" fill="#4f7ead" stroke="#39638f" />
    </g>
  ),
  collapse: (
    <g>
      <path d="M2 4h7M2 4v17h7" stroke="#aaa" fill="none" />
      <rect x="2" y="8" width="4" height="4" fill="#f5a623" />
      <rect x="2" y="16" width="4" height="4" fill="#f5a623" />
      <path d="M13 22h6V11h4l-7-9-7 9h4z" fill="#4f7ead" stroke="#39638f" />
    </g>
  ),
  removeLayer: (
    <g>
      <rect x="2" y="2" width="18" height="18" fill="#fff" stroke="#777" />
      <rect x="14" y="15" width="10" height="7" fill="#e02020" />
      <path d="M16 18.500h6" stroke="#fff" strokeWidth="1.800" />
    </g>
  ),
  addBox: (
    <g>
      <rect x="2" y="2" width="18" height="18" fill="#fff" stroke="#777" />
      <circle cx="20" cy="20" r="4" fill="#589632" />
    </g>
  ),
  layerPoly: <path d="M1 7c3-3 6-1 10-1s7-3 11-1c2 5 1 8-3 7s-6 0-8 0-8 4-9 1-2-4-1-6z" fill="#a9c6e0" stroke="#fff" />,
  lock: (
    <g>
      <path d="M7 11V7a5 5 0 0 1 10 0v4" fill="none" stroke="#888" strokeWidth="2" />
      <rect x="4" y="11" width="16" height="12" rx="2" fill="#777" />
    </g>
  ),
  extent: (
    <g fill="none" stroke="#444" strokeWidth="1.600">
      <path d="M3 2l12 13M8 1l9 11M2 7l8 10" />
      <ellipse cx="12" cy="17" rx="6" ry="4" />
      <circle cx="10" cy="11" r="3" />
    </g>
  ),
  crs: (
    <g>
      <circle cx="12" cy="12" r="10" fill="#eee" stroke="#666" />
      <path d="M2 12h20M12 2c-6 6-6 14 0 20M12 2c6 6 6 14 0 20M4 6h16M4 18h16" stroke="#666" fill="none" strokeWidth=".9" />
    </g>
  ),
  chat: (
    <g>
      <path d="M3 2h18a2 2 0 0 1 2 2v13a2 2 0 0 1-2 2h-5l-4 4v-4H3a2 2 0 0 1-2-2V4a2 2 0 0 1 2-2z" fill="#777" />
      <circle cx="7" cy="10.500" r="1.500" fill="#fff" />
      <circle cx="12" cy="10.500" r="1.500" fill="#fff" />
      <circle cx="17" cy="10.500" r="1.500" fill="#fff" />
    </g>
  ),
  search: (
    <g fill="none" stroke="#888" strokeWidth="1.800">
      <circle cx="10" cy="10" r="7" />
      <path d="M15 15l7 7" />
    </g>
  ),
  float: (
    <g fill="none" stroke="#333" strokeWidth="1.300">
      <rect x="1" y="1" width="22" height="22" rx="3" fill="#ddd" />
      <rect x="9" y="5" width="10" height="10" />
      <rect x="5" y="9" width="10" height="10" fill="#ddd" />
    </g>
  ),
  closeDock: (
    <g fill="none" stroke="#333" strokeWidth="1.300">
      <rect x="1" y="1" width="22" height="22" rx="3" fill="#ddd" />
      <path d="M6 6l12 12M18 6L6 18" strokeWidth="3" />
    </g>
  ),
};
icons.hist2 = icons.hist;
icons.histDown = icons.histUp;
icons.ringS2 = icons.ringStar;
icons.scissor2 = icons.scissor;

/* ---------- map data, coordinates are those of a 1568 x 1568 drawing of the region ---------- */
function seeded(seed) {
  return () => {
    seed = (seed + 0x6d2b79f5) | 0;
    let t = Math.imul(seed ^ (seed >>> 15), 1 | seed);
    t = (t + Math.imul(t ^ (t >>> 7), 61 | t)) ^ t;
    return ((t ^ (t >>> 14)) >>> 0) / 4294967296;
  };
}

function rough(points, amp, step, rand, closed = true) {
  const out = [];
  const count = closed ? points.length : points.length - 1;
  for (let i = 0; i < count; i++) {
    const a = points[i];
    const b = points[(i + 1) % points.length];
    out.push([a[0], a[1]]);
    if (a[2]) continue; // straight edge
    const dx = b[0] - a[0];
    const dy = b[1] - a[1];
    const len = Math.hypot(dx, dy);
    const n = Math.floor(len / step);
    for (let k = 1; k < n; k++) {
      const off = (rand() - 0.5) * 2 * amp;
      out.push([a[0] + (dx * k) / n - (dy / len) * off, a[1] + (dy * k) / n + (dx / len) * off]);
    }
  }
  if (!closed) out.push(points[points.length - 1]);
  return 'M' + out.map((p) => `${p[0].toFixed(1)} ${p[1].toFixed(1)}`).join('L') + (closed ? 'Z' : '');
}

const outlinePoints = [
  [842, 60, 1], [1030, 30, 1], [1435, 30], [1445, 75], [1455, 110], [1452, 160], [1442, 210], [1465, 245], [1472, 280], [1450, 325],
  [1475, 345], [1470, 385], [1450, 420], [1445, 480], [1430, 540, 1], [1410, 615, 1], [1380, 675], [1400, 715], [1435, 765], [1465, 765],
  [1485, 810], [1470, 845], [1430, 845], [1385, 855], [1345, 855], [1320, 890], [1280, 910], [1220, 950], [1160, 925, 1], [1130, 965],
  [1070, 1020], [1030, 1060], [985, 1090], [975, 1125], [945, 1135, 1], [940, 1250, 1], [938, 1330], [970, 1360], [1015, 1405], [965, 1430],
  [965, 1475], [905, 1490], [860, 1520], [815, 1532], [760, 1522], [700, 1510], [660, 1465], [600, 1420], [575, 1385], [552, 1350],
  [585, 1320], [578, 1295], [600, 1260], [640, 1235], [650, 1180], [640, 1130], [600, 1105], [555, 1075], [552, 1045], [570, 1000],
  [595, 970], [580, 920], [570, 850], [540, 790], [515, 720], [510, 700], [440, 695], [400, 690], [390, 710], [340, 700], [335, 650],
  [305, 610], [265, 560], [255, 505], [215, 480], [150, 455], [110, 462], [70, 490], [55, 515], [35, 485], [80, 445], [155, 400],
  [175, 330], [205, 310], [250, 335], [280, 325], [335, 350], [360, 385], [410, 430], [440, 425], [480, 482, 1], [660, 480, 1], [745, 295],
  [800, 255], [830, 210], [845, 205, 1],
];

const riverLines = [
  [[905, 170], [925, 210], [950, 250], [960, 300], [975, 340], [1000, 370], [1015, 420], [990, 480], [965, 540], [920, 575], [880, 630], [830, 700], [820, 750]],
  [[1420, 460], [1350, 460], [1330, 500], [1290, 570], [1240, 585], [1215, 630], [1170, 670], [1130, 700]],
  [[1240, 585], [1300, 595], [1360, 610], [1370, 630]],
  [[1165, 470], [1185, 520], [1225, 545], [1240, 585]],
  [[1080, 245], [1110, 290], [1130, 340]],
  [[380, 510], [430, 510], [490, 560], [515, 620], [520, 680], [515, 740], [545, 790], [580, 880]],
  [[490, 490], [600, 530], [700, 545], [800, 570], [860, 590]],
  [[640, 1040], [700, 1080], [770, 1140]],
  [[700, 860], [740, 890], [840, 900]],
  [[730, 1240], [800, 1250], [830, 1270]],
  [[750, 1300], [680, 1350], [640, 1350], [600, 1395]],
  [[705, 980], [680, 1010], [665, 1040]],
  [[610, 670], [640, 730], [690, 680], [750, 700]],
  [[760, 980], [775, 960]],
  [[310, 580], [360, 600], [420, 600]],
  [[840, 1180], [870, 1190], [920, 1180]],
  [[1010, 470], [1060, 450], [1120, 450]],
  [[1130, 780], [1140, 700], [1200, 720]],
];

const bigGreen = [
  [[1090, 850], [1135, 810], [1150, 760], [1230, 735], [1298, 705], [1298, 850], [1290, 905], [1240, 920], [1190, 935], [1160, 910], [1075, 935], [1075, 880]],
  [[1310, 555], [1345, 520], [1390, 560], [1420, 560], [1415, 610], [1370, 590]],
  [[550, 560], [580, 570], [590, 640], [570, 630], [550, 590]],
  [[300, 560], [370, 565], [330, 590]],
  [[420, 680], [510, 680], [500, 695], [430, 695]],
  [[445, 650], [490, 650], [520, 670], [470, 680]],
  [[540, 645], [600, 665], [615, 690], [560, 680]],
  [[620, 600], [650, 620], [650, 670], [620, 650]],
  [[430, 580], [445, 590], [440, 650], [425, 650]],
  [[360, 680], [395, 640], [395, 690], [365, 705]],
  [[1420, 80], [1450, 110], [1445, 130], [1430, 125]],
  [[1300, 120], [1335, 130], [1340, 175], [1300, 160]],
  [[970, 155], [1010, 155], [1020, 185], [980, 190]],
  [[960, 185], [1030, 190], [1020, 210], [985, 205]],
  [[1385, 470], [1410, 490], [1400, 510], [1385, 500]],
  [[1340, 470], [1375, 465], [1350, 490]],
  [[660, 1430], [715, 1410], [720, 1440], [690, 1470], [640, 1440]],
  [[720, 1470], [745, 1450], [740, 1490], [715, 1500]],
  [[850, 1345], [880, 1345], [890, 1400], [865, 1365]],
  [[730, 1240], [760, 1260], [810, 1245], [830, 1265], [790, 1275], [745, 1270]],
  [[845, 1175], [880, 1165], [930, 1185], [890, 1195], [860, 1205]],
  [[1400, 800], [1450, 765], [1470, 780], [1420, 810]],
  [[700, 680], [740, 690], [750, 720], [710, 720]],
  [[930, 500], [960, 510], [945, 540], [925, 530]],
  [[260, 420], [300, 440], [270, 445]],
  [[725, 810], [770, 805], [760, 825]],
  [[1130, 530], [1140, 525], [1115, 550]],
  [[1100, 575], [1140, 570], [1120, 600], [1090, 600]],
  [[425, 450], [450, 480], [420, 510]],
  [[1130, 700], [1200, 720], [1150, 780], [1110, 800]],
  [[310, 575], [350, 570], [400, 605], [340, 600]],
];

const grayAreas = [
  [[900, 690], [945, 658], [975, 685], [1010, 640], [1020, 590], [1060, 560], [1085, 535], [1085, 590], [1130, 650], [1135, 680], [1105, 680], [1115, 730], [1090, 800], [1090, 830], [1075, 870], [1070, 930], [1040, 960], [1005, 990], [1015, 1025], [980, 1010], [965, 1040], [975, 1090], [905, 1050], [905, 1000], [935, 950], [900, 925], [890, 880], [860, 875], [880, 830], [850, 780], [860, 720]],
  [[1125, 625], [1195, 605], [1205, 630], [1170, 665]],
  [[1180, 680], [1225, 720], [1220, 725], [1175, 690]],
  [[1060, 1030], [1080, 970], [1110, 925], [1085, 970], [1130, 970], [1070, 1020], [1045, 1035]],
  [[880, 1130], [915, 1090], [945, 1080], [930, 1105], [885, 1135]],
  [[815, 940], [870, 935], [860, 955]],
  [[790, 780], [825, 800], [830, 850], [795, 855], [795, 810], [775, 795]],
  [[875, 1200], [930, 1205], [935, 1240], [920, 1275], [895, 1275], [905, 1225]],
  [[850, 130], [860, 110], [885, 105], [880, 130], [855, 135]],
  [[850, 75], [870, 95], [850, 100]],
  [[1050, 185], [1085, 190], [1095, 210], [1075, 230], [1050, 225]],
  [[1045, 360], [1070, 305], [1090, 310], [1095, 340], [1060, 360]],
  [[955, 615], [985, 615], [985, 650], [955, 650]],
  [[745, 740], [780, 745], [775, 750], [745, 750]],
  [[1025, 545], [1060, 540], [1060, 555], [1025, 552]],
  [[810, 540], [835, 525], [830, 535]],
];

const lightAreas = [
  [[1182, 405], [1205, 400], [1220, 395], [1205, 460], [1190, 450]],
  [[1405, 510], [1435, 510], [1425, 530], [1403, 528]],
  [[815, 505], [830, 520], [820, 528]],
  [[703, 520], [715, 522], [705, 528]],
  [[1090, 180], [1118, 175], [1100, 188]],
  [[1380, 720], [1405, 735], [1380, 738]],
];

const blueAreas = [
  [[1315, 415], [1330, 425], [1322, 460], [1305, 455]],
  [[1258, 120], [1272, 135], [1250, 135]],
  [[1068, 232], [1082, 240], [1075, 250]],
  [[172, 325], [190, 320], [175, 335]],
  [[996, 748], [1004, 750], [1002, 765], [997, 765]],
];

// patches of scattered forest fragments: cx, cy, rx, ry, how many
const patches = [
  [430, 590, 130, 110, 340], [250, 440, 80, 60, 70], [640, 620, 120, 90, 260], [800, 520, 130, 60, 160], [930, 520, 70, 60, 120],
  [1060, 470, 70, 40, 90], [860, 380, 130, 110, 130], [1290, 170, 120, 60, 70], [1250, 300, 220, 130, 120], [700, 680, 110, 60, 170],
  [740, 840, 60, 40, 40], [740, 1420, 140, 90, 140], [850, 1320, 100, 60, 70], [880, 1185, 40, 25, 60], [1190, 640, 60, 60, 70],
  [1420, 810, 50, 40, 40], [1110, 580, 50, 40, 70], [1160, 750, 40, 50, 60], [1030, 200, 100, 80, 50],
  [1390, 360, 60, 60, 30], [620, 1080, 40, 30, 25], [850, 1020, 30, 50, 40], [1050, 1000, 30, 40, 30], [780, 1100, 70, 60, 14],
  [640, 760, 70, 50, 50], [660, 1250, 60, 40, 12], [600, 1380, 40, 30, 14],
];

function buildSpecks() {
  const rand = seeded(1234);
  const specks = [];
  patches.forEach(([cx, cy, rx, ry, n]) => {
    for (let i = 0; i < n; i++) {
      const a = rand() * Math.PI * 2;
      const r = Math.sqrt(rand());
      const x = cx + Math.cos(a) * r * rx;
      const y = cy + Math.sin(a) * r * ry;
      const ang = rand() * Math.PI;
      const len = 1.5 + rand() * rand() * 14;
      const w = 0.6 + rand() * 2.6;
      const ux = Math.cos(ang);
      const uy = Math.sin(ang);
      const pts = [
        [x - ux * len, y - uy * len],
        [x - uy * w, y + ux * w],
        [x + ux * len, y + uy * len],
        [x + uy * w * (0.4 + rand()), y - ux * w * (0.4 + rand())],
      ];
      specks.push('M' + pts.map((p) => p.map((v) => v.toFixed(1)).join(' ')).join('L') + 'Z');
    }
  });
  return specks;
}

const mapRand = seeded(77);
const outlineD = rough(outlinePoints, 5, 12, mapRand);
const riverD = riverLines.map((l) => rough(l, 5, 12, mapRand, false));
const greenD = bigGreen.map((p) => rough(p, 3, 10, mapRand));
const grayD = grayAreas.map((p) => rough(p, 2.5, 14, mapRand));
const speckD = buildSpecks();
const toD = (p) => 'M' + p.map((q) => q.join(' ')).join('L') + 'Z';

function MunicipalityMap() {
  return (
    <MapSvg viewBox="439 215 1019 806" preserveAspectRatio="none">
      <defs>
        <clipPath id="municipio">
          <path d={outlineD} />
        </clipPath>
      </defs>
      <g transform="translate(580 220) scale(.4854 .5102)">
        <path d={outlineD} fill="#ff7f00" stroke="#333" strokeWidth="1.400" />
        <g clipPath="url(#municipio)">
          {riverD.map((d, i) => (
            <path key={i} d={d} fill="none" stroke="#0d0d0d" strokeWidth="5.500" strokeLinejoin="round" />
          ))}
          {riverD.map((d, i) => (
            <path key={i} d={d} fill="none" stroke="#0b8a0b" strokeWidth="2.600" strokeLinejoin="round" />
          ))}
          {speckD.map((d, i) => (
            <path key={i} d={d} fill="#0b8a0b" stroke="#0a0a0a" strokeWidth="1.500" />
          ))}
          {greenD.map((d, i) => (
            <path key={i} d={d} fill="#0b8a0b" stroke="#111" strokeWidth="1.500" />
          ))}
          {grayD.map((d, i) => (
            <path key={i} d={d} fill="#8b8b8b" stroke="#333" strokeWidth="1.300" />
          ))}
          {lightAreas.map((p, i) => (
            <path key={i} d={toD(p)} fill="#7dff7d" stroke="#222" strokeWidth="1.200" />
          ))}
          {blueAreas.map((p, i) => (
            <path key={i} d={toD(p)} fill="#2255cc" stroke="#222" strokeWidth="1.200" />
          ))}
          <circle cx="682" cy="930" r="9" fill="#2255cc" stroke="#222" />
          <path d="M975 690v75" stroke="#222" strokeWidth="2.400" />
          <path d="M930 940c15 20 15 40-5 80l-20 30" stroke="#333" strokeWidth="1.600" fill="none" />
          <path d="M1085 850l90 12 20 15M1180 875l110-3M1170 790l5 70M1210 900l5-30M1130 880l20 25" stroke="#111" strokeWidth="1.400" fill="none" strokeDasharray="6 3" />
        </g>
      </g>
    </MapSvg>
  );
}

/* ---------- chrome ---------- */
const Shell = styled.div`
  width: 100vw;
  height: 100vh;
  display: flex;
  flex-direction: column;
  overflow: hidden;
  background: #eeeeee;
`;

const TitleBar = styled.header`
  height: 36px;
  flex: none;
  display: flex;
  align-items: center;
  justify-content: center;
  position: relative;
  background: #333333;
  border-radius: 8px 8px 0 0;
  box-shadow: inset 0 -1px 0 #2a2a2a;
`;

const TitleText = styled.span`
  font-family: "Noto Sans", "Open Sans", sans-serif;
  font-size: 12.7px;
  font-weight: 500;
  color: #f0f0f0;
  margin-left: 3px;
`;

const MinButton = styled.i`
  position: absolute;
  left: 1795px;
  top: 20px;
  width: 8px;
  height: 2px;
  background: #f5f5f5;
`;

const CloseButton = styled.i`
  position: absolute;
  left: 1824px;
  top: 9px;
  width: 18px;
  height: 18px;
  border-radius: 50%;
  background: #f08a2c;
  color: #fff;
  font: 700 14px/18px "DejaVu Sans", sans-serif;
  text-align: center;
  font-style: normal;
`;

const MenuBar = styled.nav`
  height: 23px;
  flex: none;
  display: flex;
  align-items: center;
  padding-left: 10px;
  gap: 15px;
  background: #f0f0f0;
  border-bottom: 1px solid #d6d6d6;
  box-sizing: border-box;
`;

const MenuItem = styled.span`
  font-size: 13px;
  color: #232627;
  u { text-underline-offset: 2px; }
`;

const ToolRow = styled.div`
  height: 39px;
  flex: none;
  box-sizing: border-box;
  display: flex;
  align-items: center;
  background: linear-gradient(#f8f8f8, #ededed);
  border-bottom: 1px solid #bfbfbf;
`;

const Grip = styled.span`
  flex: none;
  width: ${(p) => (p.$lead ? 12 : 16)}px;
  height: 22px;
  display: flex;
  justify-content: center;
  &::before {
    content: '';
    width: 6px;
    height: 100%;
    background-image: radial-gradient(circle, #b4b4b4 .8px, transparent 1px);
    background-size: 3px 4px;
  }
`;

const Sep = styled.span`
  flex: none;
  width: 7px;
  height: 26px;
  display: flex;
  justify-content: center;
  &::before {
    content: '';
    width: 1px;
    background: #d2d2d2;
  }
`;

const ToolButton = styled.span`
  flex: none;
  box-sizing: border-box;
  width: 31px;
  height: 30px;
  margin: 0 1px;
  display: flex;
  align-items: center;
  justify-content: center;
  border-radius: 3px;
  border: 1px solid ${(p) => (p.$active ? '#b3b3b3' : 'transparent')};
  background: ${(p) => (p.$active ? '#d8d8d8' : 'transparent')};
`;

const Caret = styled.span`
  flex: none;
  width: 12px;
  display: flex;
  justify-content: center;
  &::before {
    content: '';
    border-left: 4px solid transparent;
    border-right: 4px solid transparent;
    border-top: 4px solid ${(p) => (p.$off ? '#c4c4c4' : '#555')};
  }
`;

const IconSvg = styled.svg`
  flex: none;
  display: block;
  overflow: visible;
  filter: ${(p) => (p.$off ? 'grayscale(1) opacity(.3)' : 'none')};
`;

const Icon = ({ name, size = 24, off }) => (
  <IconSvg viewBox="0 0 24 24" width={size} height={size} $off={off}>
    {icons[name]}
  </IconSvg>
);

function Tools({ list }) {
  return list.split(' ').map((token, i) => {
    if (token === 'g0') return <Grip key={i} $lead />;
    if (token === 'g') return <Grip key={i} />;
    if (token === 's') return <Sep key={i} />;
    const name = token.replace(/[!>*]/g, '');
    const off = token.includes('!');
    return (
      <React.Fragment key={i}>
        <ToolButton $active={token.includes('*')}>
          <Icon name={name} off={off} />
        </ToolButton>
        {token.includes('>') && <Caret $off={off} />}
      </React.Fragment>
    );
  });
}

const SpinBox = styled.div`
  flex: none;
  box-sizing: border-box;
  width: ${(p) => p.$w}px;
  height: ${(p) => p.$h || 24}px;
  margin-left: ${(p) => p.$ml || 0}px;
  display: flex;
  align-items: center;
  border: 1px solid ${(p) => (p.$off ? '#cfcfcf' : '#bdbdbd')};
  border-radius: 3px;
  background: ${(p) => (p.$off ? '#efefef' : '#fff')};
  color: ${(p) => (p.$off ? '#b0b0b0' : '#232627')};
  font-size: ${(p) => p.$fs || 13}px;
  padding-left: ${(p) => p.$pl || 4}px;
  overflow: hidden;
`;

const SpinText = styled.span`
  flex: 1;
  white-space: nowrap;
`;

const SpinArrows = styled.span`
  flex: none;
  align-self: stretch;
  width: ${(p) => p.$w || 13}px;
  display: flex;
  flex-direction: column;
  align-items: center;
  justify-content: center;
  gap: 3px;
  border-left: 1px solid ${(p) => (p.$off ? '#cfcfcf' : '#c8c8c8')};
  background: ${(p) => (p.$off ? '#eeeeee' : '#f6f6f6')};
`;

const TriUp = styled.i`
  border-left: 3.500px solid transparent;
  border-right: 3.500px solid transparent;
  border-bottom: 4px solid ${(p) => (p.$off ? '#bbbbbb' : '#555')};
`;

const TriDown = styled.i`
  border-left: 3.500px solid transparent;
  border-right: 3.500px solid transparent;
  border-top: 4px solid ${(p) => (p.$off ? '#bbbbbb' : '#555')};
`;

/* ---------- main area ---------- */
const Main = styled.main`
  flex: 1;
  min-height: 0;
  display: flex;
`;

const LeftBar = styled.aside`
  flex: none;
  width: 52px;
  box-sizing: border-box;
  padding-top: 4px;
  display: flex;
  flex-direction: column;
  background: linear-gradient(90deg, #f9f9f9, #eeeeee);
  border-right: 1px solid #bdbdbd;
`;

const LeftGrip = styled.span`
  align-self: center;
  flex: none;
  width: 20px;
  height: 6px;
  margin: 0 0 1px 0;
  background-image: radial-gradient(circle, #c0c0c0 .8px, transparent 1px);
  background-size: 4px 3px;
`;

const LeftTool = styled.span`
  flex: none;
  height: 32px;
  display: flex;
  align-items: center;
  padding-left: 8px;
  gap: 6px;
`;

const LeftCaret = styled(Caret)`
  width: 8px;
`;

const DockColumn = styled.div`
  flex: none;
  width: ${(p) => p.$w}px;
  display: flex;
  flex-direction: column;
  min-height: 0;
`;

const DockTitleRow = styled.div`
  flex: none;
  height: 18px;
  display: flex;
  align-items: center;
  padding-left: 4px;
  font-size: 13px;
  color: #232627;
  letter-spacing: .1px;
`;

const DockTitleText = styled.span`
  flex: 1;
`;

const DockButtons = styled.span`
  display: flex;
  gap: 3px;
  padding-right: ${(p) => p.$pr || 2}px;
`;

const DockTools = styled.div`
  flex: none;
  height: ${(p) => p.$h || 32}px;
  display: flex;
  align-items: center;
  padding-left: 3px;
`;

const DockTool = styled.span`
  flex: none;
  width: 25px;
  display: flex;
  justify-content: center;
  align-items: center;
`;

const DockSep = styled.span`
  flex: none;
  width: 1px;
  height: 16px;
  background: #d0d0d0;
  margin: 0 3px 0 4px;
`;

const TreeBox = styled.div`
  flex: ${(p) => (p.$fixed ? `0 0 ${p.$fixed}px` : 1)};
  min-height: 0;
  box-sizing: border-box;
  background: #fff;
  border: 1px solid #bdbdbd;
  overflow: hidden;
`;

const TreeRow = styled.div`
  height: 19px;
  display: flex;
  align-items: center;
  white-space: nowrap;
  font-size: 13px;
`;

const ArrowCell = styled.span`
  flex: none;
  box-sizing: border-box;
  width: 21px;
  padding-right: 1px;
  display: flex;
  justify-content: center;
`;

const ArrowRight = styled.i`
  border-top: 4px solid transparent;
  border-bottom: 4px solid transparent;
  border-left: 4.500px solid #6a6a6a;
`;

const ArrowDown = styled.i`
  margin-top: 1px;
  border-left: 4.500px solid transparent;
  border-right: 4.500px solid transparent;
  border-top: 4.500px solid #123a5c;
`;

const IconCell = styled.span`
  flex: none;
  width: 20px;
  margin-right: 4px;
  display: flex;
  justify-content: center;
`;

const LayerIconCell = styled(IconCell)`
  margin: 0 0 0 4px;
`;

const Splitter = styled.div`
  flex: none;
  height: 6px;
  display: flex;
  justify-content: center;
  align-items: center;
  &::before {
    content: '';
    width: 18px;
    height: 3px;
    background-image: radial-gradient(circle, #b8b8b8 .7px, transparent 1px);
    background-size: 3px 3px;
  }
`;

const LayerRow = styled(TreeRow)`
  background: ${(p) => (p.$selected ? '#308cc6' : 'transparent')};
`;

const Check = styled.span`
  flex: none;
  box-sizing: border-box;
  width: 14px;
  height: 14px;
  margin-left: ${(p) => p.$ml || 0}px;
  background: #fff;
  border: 1px solid #a8a8a8;
  border-radius: 1px;
  color: #111;
  font: 700 11px/12px "DejaVu Sans", sans-serif;
  text-align: center;
`;

const LayerName = styled.span`
  margin-left: 3px;
  padding: 0 1px;
  font-weight: 700;
  color: #fff;
  text-decoration: underline;
  border-left: 1px dotted #a9d1ea;
`;

const Swatch = styled.span`
  flex: none;
  box-sizing: border-box;
  width: 18px;
  height: 17px;
  margin: 0 6px 0 6px;
  background: ${(p) => p.$c};
  border: 1px solid #333;
`;

const CanvasFrame = styled.section`
  flex: none;
  width: 1019px;
  margin-left: 5px;
  background: #fff;
  box-sizing: border-box;
  border: 1px solid #c4c4c4;
  overflow: hidden;
`;

const MapSvg = styled.svg`
  display: block;
  width: 100%;
  height: 100%;
`;

const RightDock = styled(DockColumn)`
  margin-left: 6px;
`;

const SearchBox = styled.div`
  flex: none;
  height: 24px;
  margin-bottom: 1px;
  box-sizing: border-box;
  display: flex;
  align-items: center;
  gap: 7px;
  padding-left: 8px;
  background: #fff;
  border: 1px solid #bdbdbd;
  border-radius: 3px;
  color: #8a8a8a;
  font-size: 13px;
`;

/* ---------- status bar ---------- */
const StatusBar = styled.footer`
  flex: none;
  height: 32px;
  display: flex;
  align-items: center;
  font-size: 11px;
  color: #232627;
  background: #eeeeee;
`;

const Locator = styled.div`
  flex: none;
  box-sizing: border-box;
  width: 355px;
  height: 24px;
  margin-left: 4px;
  display: flex;
  align-items: center;
  gap: 7px;
  padding-left: 8px;
  background: #fff;
  border: 1px solid #bdbdbd;
  border-radius: 3px;
  color: #7f7f7f;
  font-size: 13px;
`;

const StatusLabel = styled.span`
  flex: none;
  margin-left: ${(p) => p.$ml || 0}px;
  white-space: nowrap;
`;

const StatusIcon = styled.span`
  flex: none;
  display: flex;
  margin-left: ${(p) => p.$ml || 0}px;
`;

const rows = [
  'g0 new open save layout layoutMgr style g hand* pan zoomIn zoomOut zoomFull zoomLayer zoomSel zoom11! zoomLast zoomNext! mapView! view3d! bookmark bookmarks temporal refresh g identify table stats gear* sigma ruler> balloon run!> textAnn> g select> form> deselect> selLoc',
  'g0 dsm gpkgNew vNew featherNew chipNew s virtualNew s g pens! pencil saveEdit! blobStar! vertex!> tableEdit! trash! cut! copy! paste! undo! redo! g lblYellow diagram s lblPin lblRed s lblTemp! lblEye! lblMove! lblRot! lblEdit! g db g globeBin globePlus globeSearch g python g help g',
  'g0 curve! triangle! blobArrow!> blobRot! offsetHex! ringStar! partStar! ringS2! ringX! partX! blobFill! reshape! vRot! splitSnap! scissor! scissor2! merge! align! rotate!> g hist! histUp! hist2! histDown! sunUp! sunDown! conUp! conDown! gamUp! gamDown!',
];
const snapBefore = 'g0 cCurve!> cCircle!> cEllipse!> cRect!> cPoly!> g magnet vSnap! dots*';
const snapAfter = 'axes blobDots cross! crossMerge!> nodes!';

const menus = [
  ['', 'Projeto'], ['E', 'ditar'], ['V', 'isão'], ['C', 'amada'], ['C', 'onfigurações'], ['C', 'omplementos'],
  ['Vet', 'or', 'o'], ['R', 'aster'], ['B', 'ase de dados'], ['W', 'eb'], ['M', 'alha'], ['Pro', 'cessar', 'c'], ['A', 'juda'],
];

const leftTools = [
  ['vAdd'], ['rasterAdd'], ['meshAdd'], ['textAdd'], ['featherAdd'], ['virtualAdd'], ['pgAdd', 1], ['globeAdd', 1], ['wcsAdd'], ['wfsAdd', 1], ['vStar', 1],
];

const browserItems = [
  ['fav', 'Favoritos'], ['favGeo', 'Favoritos Espaciais', 1], ['projHome', 'Casa do projeto', 1], ['home', 'Início', 1], ['root', '/', 1],
  ['gpkg', 'GeoPackage'], ['feather', 'SpatiaLite'], ['pg', 'PostGIS'], ['mssql', 'MSSQL'], ['db2', 'DB2'], ['wms', 'WMS/WMTS'],
  ['vTiles', 'Vector Tiles'], ['xyz', 'XYZ Tiles', 1], ['wcs', 'WCS'], ['wfs', 'WFS / OGC API - Features'], ['ows', 'OWS'],
  ['arc', 'Servidor de mapa do ArcGIS'], ['geonode', 'GeoNode'], ['arc', 'Servidor de feição do ArcGIS'],
];

const legend = [
  ['#2255cc', 'água'], ['#ff7f00', 'área antropizada'], ['#8b8b8b', 'área edificada'], ['#0b8a0b', 'formação florestal'], ['#72ff72', 'silvicultura'],
];

const algorithms = [
  'Análise de dados Raster', 'Análise de rede', 'Análise vetorial', 'Banco de dados', 'Cartografia', 'Criação de raster', 'Criação de vetor',
  'Ferramentas de arquivo', 'Ferramentas de camada', 'Ferramentas raster', 'Geometria do vetor', 'Interpolar', 'Malha', 'Mosaico vetor', 'Plotar',
  'Raster de análise do terreno', 'Selecionar vetor', 'Sobreposição de vetor', 'Tabela de vetores', 'Vetor geral',
];

const InfoCircle = styled.span`
  width: 15px;
  height: 15px;
  border-radius: 50%;
  background: #6a97c6;
  color: #fff;
  font: italic 700 11px/15px "DejaVu Serif", serif;
  text-align: center;
`;

function Tree({ icon, text, arrow }) {
  return (
    <TreeRow>
      <ArrowCell>{arrow && <ArrowRight />}</ArrowCell>
      <IconCell>
        <Icon name={icon} size={16} />
      </IconCell>
      {text}
    </TreeRow>
  );
}

function DockHead({ title, pr }) {
  return (
    <DockTitleRow>
      <DockTitleText>{title}</DockTitleText>
      <DockButtons $pr={pr}>
        <Icon name="float" size={11} />
        <Icon name="closeDock" size={11} />
      </DockButtons>
    </DockTitleRow>
  );
}

export default function App() {
  return (
    <>
      <GlobalStyle />
      <Shell>
        <TitleBar>
          <TitleText>*projeto_qgis_minicurso_sebio — QGIS</TitleText>
          <MinButton />
          <CloseButton>×</CloseButton>
        </TitleBar>

        <MenuBar>
          {menus.map(([a, b, under], i) => (
            <MenuItem key={i}>
              {under ? (
                <>
                  {a}
                  <u>{under}</u>
                  {b.slice(under.length)}
                </>
              ) : a ? (
                <>
                  <u>{a}</u>
                  {b}
                </>
              ) : (
                b
              )}
            </MenuItem>
          ))}
        </MenuBar>

        {rows.map((r, i) => (
          <ToolRow key={i}>
            <Tools list={r} />
          </ToolRow>
        ))}
        <ToolRow>
          <Tools list={snapBefore} />
          <SpinBox $off $w={101} $ml={2} $pl={4}>
            <SpinText>12</SpinText>
            <SpinArrows $off>
              <TriUp $off />
              <TriDown $off />
            </SpinArrows>
          </SpinBox>
          <SpinBox $off $w={108} $ml={2} $pl={4}>
            <SpinText>px</SpinText>
            <Caret $off />
          </SpinBox>
          <Tools list={snapAfter} />
        </ToolRow>

        <Main>
          <LeftBar>
            <LeftGrip />
            {leftTools.map(([name, drop]) => (
              <LeftTool key={name}>
                <Icon name={name} />
                {drop && <LeftCaret />}
              </LeftTool>
            ))}
          </LeftBar>

          <DockColumn $w={382}>
            <DockHead title="Navegador" pr={3} />
            <DockTools>
              {['addBox', 'refresh', 'filter', 'collapse'].map((n) => (
                <DockTool key={n}>
                  <Icon name={n} size={18} />
                </DockTool>
              ))}
              <DockTool>
                <InfoCircle>i</InfoCircle>
              </DockTool>
            </DockTools>
            <TreeBox $fixed={391}>
              {browserItems.map(([icon, text, arrow], i) => (
                <Tree key={i} icon={icon} text={text} arrow={arrow} />
              ))}
            </TreeBox>
            <Splitter />
            <DockHead title="Camadas" pr={3} />
            <DockTools $h={33}>
              {['brush', 'addGroup', 'eye', 'filter', 'epsilon'].map((n) => (
                <DockTool key={n}>
                  <Icon name={n} size={18} />
                </DockTool>
              ))}
              <Caret />
              {['expand', 'collapse', 'removeLayer'].map((n) => (
                <DockTool key={n}>
                  <Icon name={n} size={18} />
                </DockTool>
              ))}
            </DockTools>
            <TreeBox>
              <LayerRow $selected>
                <ArrowCell>
                  <ArrowDown />
                </ArrowCell>
                <Check $ml={2}>✓</Check>
                <LayerIconCell>
                  <Icon name="layerPoly" size={16} />
                </LayerIconCell>
                <LayerName>SP_3543907_USO_sirgas2000_utm23s</LayerName>
              </LayerRow>
              {legend.map(([c, text]) => (
                <LayerRow key={text}>
                  <Check $ml={43}>✓</Check>
                  <Swatch $c={c} />
                  {text}
                </LayerRow>
              ))}
            </TreeBox>
          </DockColumn>

          <CanvasFrame>
            <MunicipalityMap />
          </CanvasFrame>

          <RightDock $w={387}>
            <DockHead title="Caixa de Ferramentas de processamento" pr={0} />
            <DockTools>
              {['gearsRun', 'python', 'clock', 'doc'].map((n) => (
                <DockTool key={n}>
                  <Icon name={n} size={18} />
                </DockTool>
              ))}
              <DockSep />
              <DockTool>
                <Icon name="editY" size={18} />
              </DockTool>
              <DockSep />
              <DockTool>
                <Icon name="wrench" size={18} />
              </DockTool>
            </DockTools>
            <SearchBox>
              <Icon name="search" size={13} />
              Buscar...
            </SearchBox>
            <TreeBox>
              <Tree icon="clock" text="Usado recentemente" arrow />
              {algorithms.map((t) => (
                <Tree key={t} icon="qgis" text={t} arrow />
              ))}
              <Tree icon="gdal" text="GDAL" arrow />
              <Tree icon="grass" text="GRASS" arrow />
              <Tree icon="saga" text="SAGA" arrow />
            </TreeBox>
          </RightDock>
        </Main>

        <StatusBar>
          <Locator>
            <Icon name="search" size={13} />
            Escreva para localizar (Ctrl+K)
          </Locator>
          <StatusLabel $ml={592}>Coordenada</StatusLabel>
          <SpinBox $w={109} $ml={3} $pl={6} $fs={11}>
            <SpinText>237011,7538745</SpinText>
          </SpinBox>
          <StatusIcon $ml={4}>
            <Icon name="extent" size={16} />
          </StatusIcon>
          <StatusLabel $ml={15}>Escala</StatusLabel>
          <SpinBox $w={97} $ml={4} $pl={3} $fs={11}>
            <SpinText>1:168874</SpinText>
            <SpinArrows $w={20}>
              <TriDown />
            </SpinArrows>
          </SpinBox>
          <StatusIcon $ml={10}>
            <Icon name="lock" size={15} />
          </StatusIcon>
          <StatusLabel $ml={8}>Lupa</StatusLabel>
          <SpinBox $w={96} $ml={3} $pl={4} $fs={11}>
            <SpinText>100%</SpinText>
            <SpinArrows>
              <TriUp />
              <TriDown />
            </SpinArrows>
          </SpinBox>
          <StatusLabel $ml={11}>Rotação</StatusLabel>
          <SpinBox $w={93} $ml={9} $pl={4} $fs={11}>
            <SpinText>0.0 °</SpinText>
            <SpinArrows>
              <TriUp />
              <TriDown />
            </SpinArrows>
          </SpinBox>
          <Check $ml={7}>✓</Check>
          <StatusLabel $ml={7}>Renderizar</StatusLabel>
          <StatusIcon $ml={16}>
            <Icon name="crs" size={14} />
          </StatusIcon>
          <StatusLabel $ml={1}>EPSG:31983</StatusLabel>
          <StatusIcon $ml={23}>
            <Icon name="chat" size={16} />
          </StatusIcon>
        </StatusBar>
      </Shell>
    </>
  );
}
